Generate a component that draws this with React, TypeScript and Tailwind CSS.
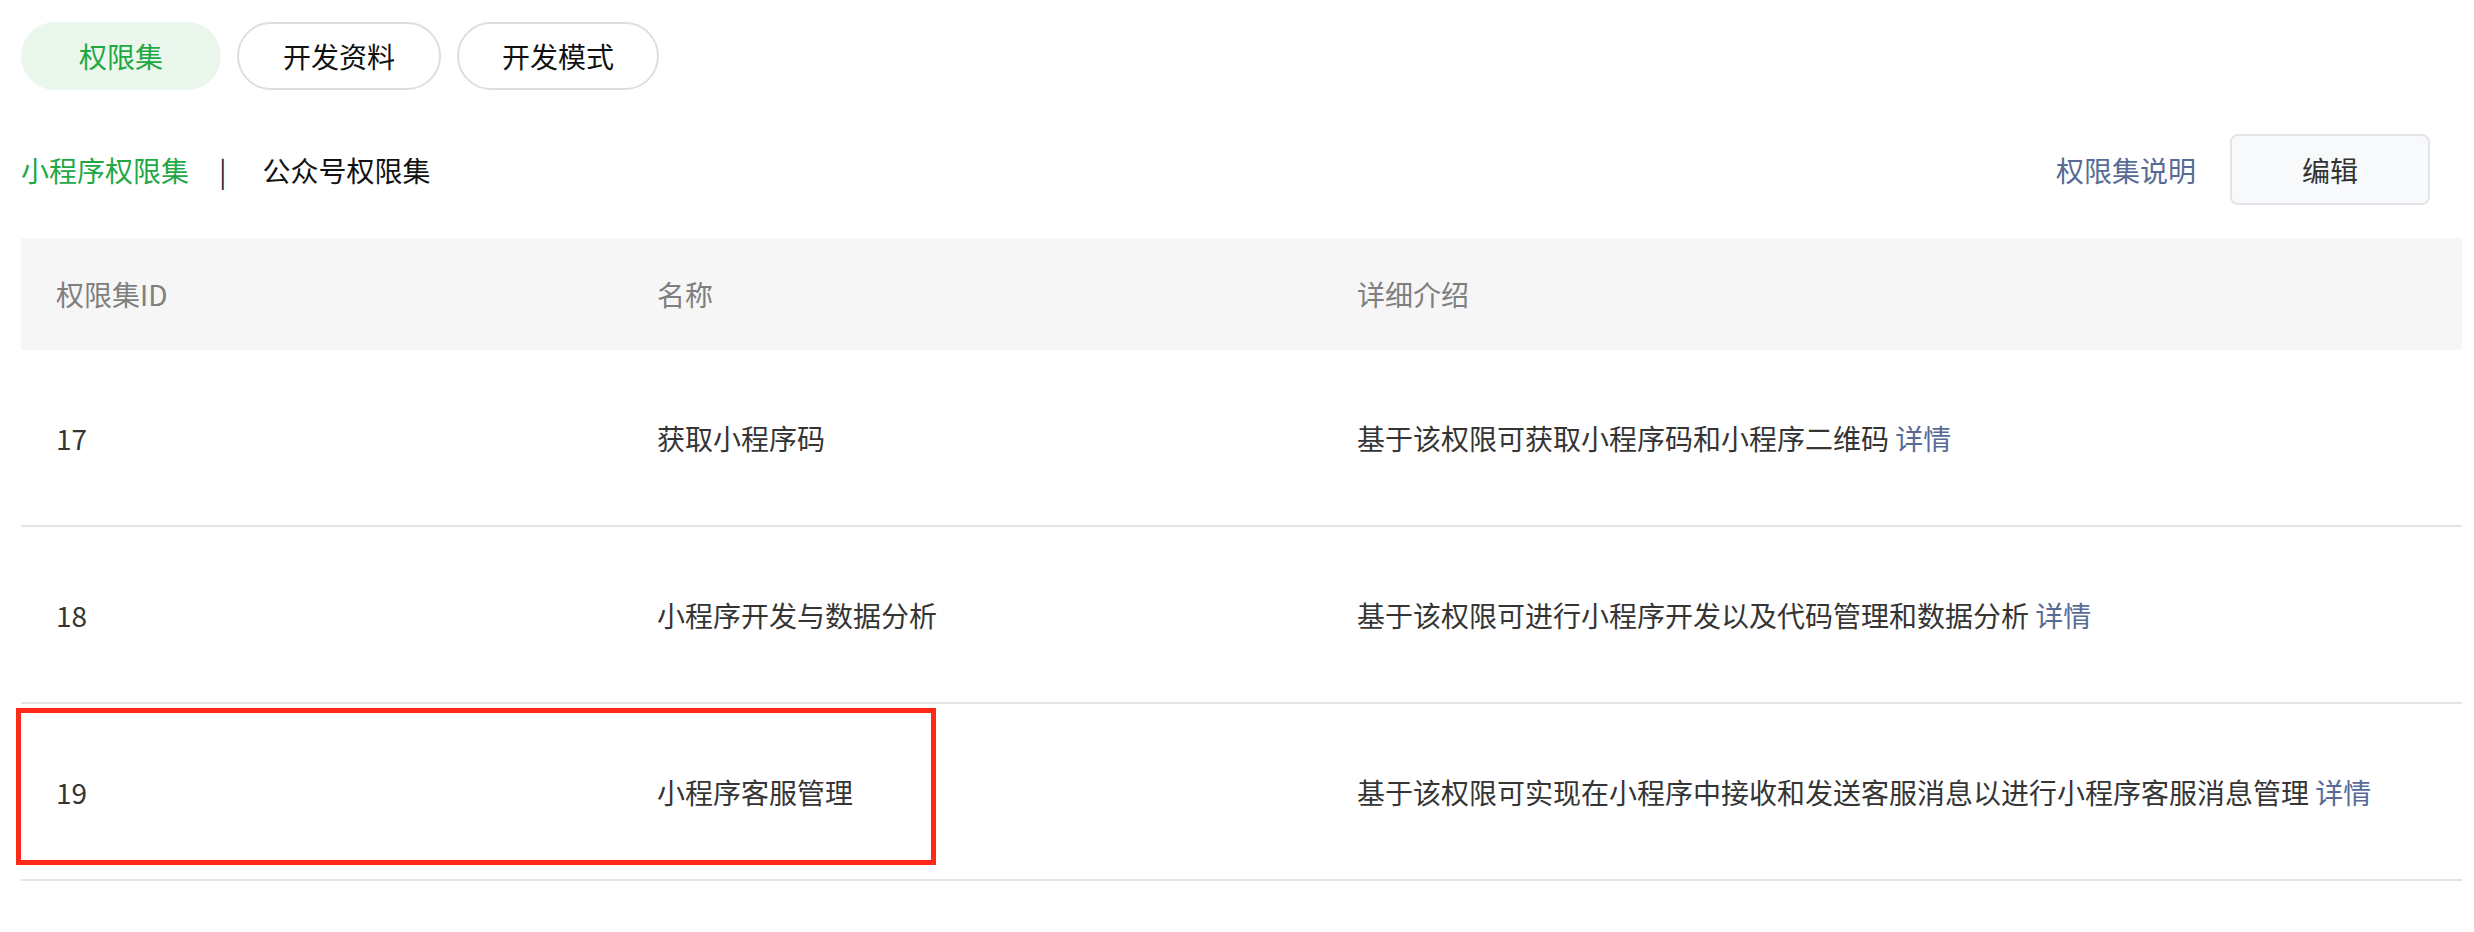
const rows = [
  { id: "17", name: "获取小程序码", desc: "基于该权限可获取小程序码和小程序二维码" },
  { id: "18", name: "小程序开发与数据分析", desc: "基于该权限可进行小程序开发以及代码管理和数据分析" },
  {
    id: "19",
    name: "小程序客服管理",
    desc: "基于该权限可实现在小程序中接收和发送客服消息以进行小程序客服消息管理",
  },
];

export default function App() {
  return (
    <div
      className="relative w-[2474px] h-[932px] bg-white text-[28px] text-[#353535]"
      style={{ fontFamily: '"Noto Sans CJK SC", "Noto Sans", sans-serif' }}
    >
      <div className="pl-[21px] pr-[12px] pt-[22px]">
        {/* 顶部标签 */}
        <div className="flex gap-[16px]">
          <button className="w-[200px] h-[68px] rounded-full bg-[#ebf7ed] text-[#1fa844] leading-none">
            权限集
          </button>
          <button className="w-[204px] h-[68px] rounded-full border-2 border-[#dedede] text-[#111] leading-none">
            开发资料
          </button>
          <button className="w-[202px] h-[68px] rounded-full border-2 border-[#dedede] text-[#111] leading-none">
            开发模式
          </button>
        </div>

        {/* 子标签 + 操作 */}
        <div className="mt-[44px] h-[71px] flex items-center justify-between">
          <div className="flex items-center leading-none">
            <span className="text-[#1fa844]">小程序权限集</span>
            <span className="ml-[30px] mr-[36px] text-[#333]">|</span>
            <span className="text-[#111]">公众号权限集</span>
          </div>
          <div className="flex items-center mr-[32px]">
            <a className="text-[#576b95] leading-none">权限集说明</a>
            <button className="ml-[34px] w-[200px] h-[71px] rounded-[8px] border-2 border-[#e1e5ea] bg-[#f8f9fa] text-[#333] leading-none">
              编辑
            </button>
          </div>
        </div>

        {/* 表格 */}
        <div className="mt-[33px]">
          <div className="grid grid-cols-[601px_700px_1fr] h-[112px] items-center bg-[#f6f6f6] text-[#7f7f7f]">
            <div className="pl-[35px]">权限集ID</div>
            <div className="pl-[35px]">名称</div>
            <div className="pl-[35px]">详细介绍</div>
          </div>
          {rows.map((r) => (
            <div
              key={r.id}
              className="grid grid-cols-[601px_700px_1fr] h-[177px] items-center border-b-2 border-[#e4e4e4]"
            >
              <div className="pl-[35px]">{r.id}</div>
              <div className="pl-[35px]">{r.name}</div>
              <div className="pl-[35px]">
                {r.desc} <a className="text-[#576b95]">详情</a>
              </div>
            </div>
          ))}
        </div>
      </div>

      {/* 红框标注 */}
      <div className="absolute left-[16px] top-[708px] w-[920px] h-[157px] border-[5px] border-[#ff2a1a] pointer-events-none" />
    </div>
  );
}
